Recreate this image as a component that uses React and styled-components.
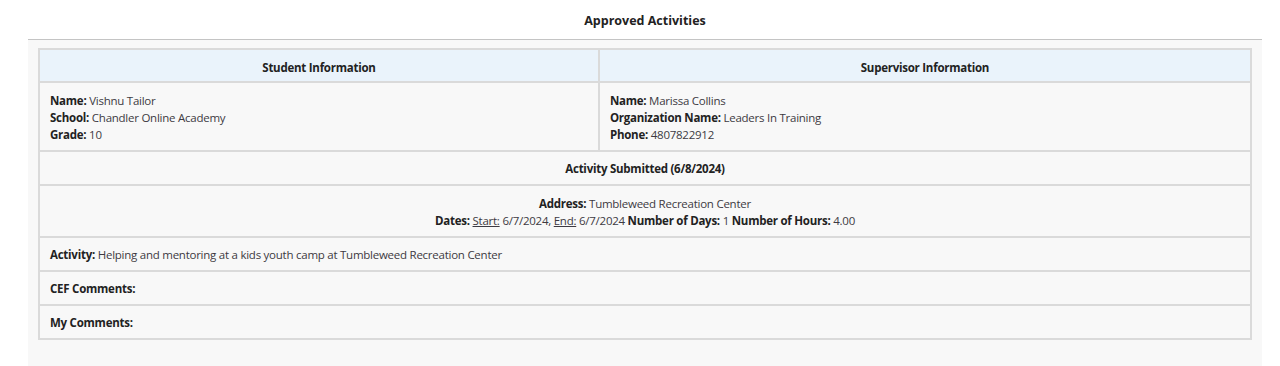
import styled, { createGlobalStyle } from 'styled-components';

const GlobalStyle = createGlobalStyle`
  body {
    margin: 0;
    background: #ffffff;
    font-family: "Segoe UI", "Open Sans", "Liberation Sans", sans-serif;
    color: #333333;
  }
`;

const Page = styled.div`
  width: 1234px;
  margin-left: 28px;
`;

const Title = styled.h1`
  margin: 0;
  padding: 12px 0 10px;
  font-size: 12.5px;
  line-height: 17px;
  font-weight: 700;
  color: #222222;
  text-align: center;
`;

const Panel = styled.section`
  background: #f8f8f8;
  border-top: 1px solid #c4c4c4;
  padding: 8px 10px 40px;
`;

const Table = styled.table`
  width: 100%;
  border-collapse: collapse;
  font-size: 11.5px;
  line-height: 17px;
  letter-spacing: -0.25px;
`;

const HeadCell = styled.th`
  background: #eaf3fb;
  border: 2px solid #dadada;
  padding: 9px 10px 5px;
  font-weight: 700;
  color: #222222;
  text-align: center;
`;

const Cell = styled.td`
  border: 2px solid #dadada;
  padding: ${({ $multi }) => ($multi ? '9px 10px 7px' : '8px 10px 7px')};
  text-align: ${({ $center }) => ($center ? 'center' : 'left')};
  font-weight: ${({ $bold }) => ($bold ? 700 : 400)};
  color: ${({ $bold }) => ($bold ? '#222222' : '#3d3a42')};
  vertical-align: top;
`;

const Label = styled.b`
  font-weight: 700;
  color: #222222;
`;

const Line = styled.div``;

const Under = styled.span`
  text-decoration: underline;
`;

function Field({ label, children }) {
  return (
    <Line>
      <Label>{label}:</Label> {children}
    </Line>
  );
}

export default function App() {
  return (
    <Page>
      <GlobalStyle />
      <Title>Approved Activities</Title>
      <Panel>
        <Table>
          <colgroup>
            <col style={{ width: '46.2%' }} />
            <col />
          </colgroup>
          <thead>
            <tr>
              <HeadCell>Student Information</HeadCell>
              <HeadCell>Supervisor Information</HeadCell>
            </tr>
          </thead>
          <tbody>
            <tr>
              <Cell $multi>
                <Field label="Name">Vishnu Tailor</Field>
                <Field label="School">Chandler Online Academy</Field>
                <Field label="Grade">10</Field>
              </Cell>
              <Cell $multi>
                <Field label="Name">Marissa Collins</Field>
                <Field label="Organization Name">Leaders In Training</Field>
                <Field label="Phone">4807822912</Field>
              </Cell>
            </tr>
            <tr>
              <Cell colSpan={2} $center $bold>Activity Submitted (6/8/2024)</Cell>
            </tr>
            <tr>
              <Cell colSpan={2} $center $multi>
                <Field label="Address">Tumbleweed Recreation Center</Field>
                <Line>
                  <Label>Dates:</Label> <Under>Start:</Under> 6/7/2024, <Under>End:</Under> 6/7/2024{' '}
                  <Label>Number of Days:</Label> 1 <Label>Number of Hours:</Label> 4.00
                </Line>
              </Cell>
            </tr>
            <tr>
              <Cell colSpan={2}>
                <Field label="Activity">Helping and mentoring at a kids youth camp at Tumbleweed Recreation Center</Field>
              </Cell>
            </tr>
            <tr>
              <Cell colSpan={2}>
                <Label>CEF Comments:</Label>
              </Cell>
            </tr>
            <tr>
              <Cell colSpan={2}>
                <Label>My Comments:</Label>
              </Cell>
            </tr>
          </tbody>
        </Table>
      </Panel>
    </Page>
  );
}
